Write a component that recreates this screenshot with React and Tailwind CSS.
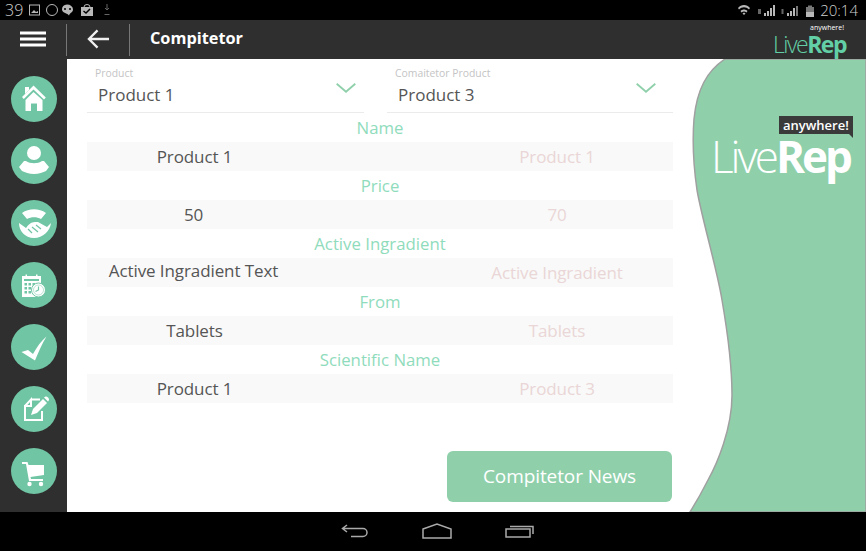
import React from "react";

const F = { fontFamily: '"Open Sans", sans-serif' };

const Home = () => (
  <svg viewBox="0 0 46 46" className="w-[46px] h-[46px]" fill="#fff">
    <path d="M22.500 9.500 L11 21 l1.800 2 L22.500 13.500 L33 23.500 l1.800-2 Z" />
    <path d="M14 11h4v3l-4 4z" />
    <path d="M14.500 24 L22.500 16 L31.500 24 V35 H26 V27.500 H20 V35 H14.500 Z" />
  </svg>
);
const User = () => (
  <svg viewBox="0 0 46 46" className="w-[46px] h-[46px]" fill="#fff">
    <circle cx="23" cy="15" r="7" />
    <path d="M15 23 c4 3 12 3 16 0 l2 0 l5 6 l-3 4 c-3 1 -7 3 -12 3 s-9 -2 -12 -3 l-3 -4 l5 -6z" />
  </svg>
);
const Shake = () => (
  <svg viewBox="0 0 46 46" className="w-[46px] h-[46px]" fill="#fff">
    <path d="M11 13 C18 8 28 8 35 13 L30 19 C26 16.500 20 16.500 16 19 Z" />
    <path d="M8 23 l7 5 c2-3 5-6 9-6 l3 0 l9 5 l4-4 C39 31 32 38 23 38 C14 38 8 31 8 23Z" />
    <path d="M17 29 l4 4 M21 27 l6 5 M25 25 l5 4" stroke="#70c5a4" strokeWidth="1.200" fill="none" />
  </svg>
);
const Plan = () => (
  <svg viewBox="0 0 46 46" className="w-[46px] h-[46px]">
    <rect x="11" y="14" width="19" height="21" fill="#fff" />
    <rect x="14.500" y="12.500" width="1.500" height="3.500" fill="#fff" />
    <rect x="25" y="12.500" width="1.500" height="3.500" fill="#fff" />
    <rect x="13" y="17" width="15" height="2" fill="#70c5a4" />
    <path d="M13.500 21h2.500v2.500h-2.500zM17.500 21h2.500v2.500h-2.500zM21.500 21h2.500v2.500h-2.500zM13.500 25h2.500v2.500h-2.500zM17.500 25h2.500v2.500h-2.500zM13.500 29h2.500v2.500h-2.500zM17.500 29h2.500v2.500h-2.500z" fill="#70c5a4" />
    <circle cx="27.500" cy="28" r="7" fill="#fff" stroke="#70c5a4" strokeWidth="1" />
    <circle cx="27.500" cy="28" r="5" fill="none" stroke="#a8dcc6" strokeWidth="0.800" />
    <path d="M27.500 24.500v3.500l-3 1.500" stroke="#70c5a4" strokeWidth="1.200" fill="none" />
  </svg>
);
const Check = () => (
  <svg viewBox="0 0 46 46" className="w-[46px] h-[46px]" fill="#fff">
    <path d="M10.500 28 L17 26 L22 30 C26 23 30 17 35.500 12.500 C31 20 27 29 24 36.500 Z" />
  </svg>
);
const Edit = () => (
  <svg viewBox="0 0 46 46" className="w-[46px] h-[46px]" fill="none">
    <path d="M20 13.500 H29 M14 20 L20 13.500 V20 H14 V34 H31 V25" stroke="#fff" strokeWidth="2" />
    <path d="M20 29 L22 23 L32 13 L36 17 L26 27 Z" fill="#fff" />
    <path d="M33 11.500 a2.500 2.500 0 0 1 4 4z" fill="#fff" />
  </svg>
);
const Cart = () => (
  <svg viewBox="0 0 46 46" className="w-[46px] h-[46px]" fill="#fff">
    <path d="M11 14 h5.500 l1 3 H33 V27 L19.500 29 L20 31 H32 V33 H18 L15 16 H11 Z" />
    <circle cx="18.500" cy="36" r="2.200" />
    <circle cx="30" cy="36" r="2.200" />
  </svg>
);

const Chevron = () => (
  <svg viewBox="0 0 20 10" className="w-5 h-[10px]" fill="none">
    <path d="M0.700 0.700 L10 8.800 L19.300 0.700" stroke="#8fd0ab" strokeWidth="1.800" />
  </svg>
);

const Select = ({ label, value, cls, chev }) => (
  <div className={`relative h-[54px] border-b border-[#ebebeb] ${cls}`}>
    <div className="pl-2 pt-[7px] text-[10.400px] leading-[14px] text-[#c4c4c4]">{label}</div>
    <div className="pl-[11px] pt-[1px] text-[17px] leading-[27px] text-[#555555]">{value}</div>
    <div className={`absolute top-[24px] flex ${chev}`}><Chevron /></div>
  </div>
);

const Row = ({ title, a, b, aCls = "", bCls = "" }) => (
  <>
    <div className="h-[29px] flex items-center justify-center text-[16.800px] text-[#8fdcbc]">{title}</div>
    <div className="h-[29px] bg-[#f9f9f9] flex items-center">
      <div className={`w-[213px] text-center text-[17px] tracking-[-0.100px] text-[#555555] ${aCls}`}>{a}</div>
      <div className={`w-[226px] ml-[144px] text-center text-[17px] tracking-[-0.100px] text-[#ead6d6] ${bCls}`}>{b}</div>
    </div>
  </>
);

const Logo = ({ small }) =>
  small ? (
    <div className="flex flex-col items-end mr-[20px] leading-none pb-[1px]">
      <span className="text-[7px] text-white mr-[2px] leading-[9px]">anywhere!</span>
      <span className="text-[23px] leading-[24px] tracking-[-1.500px] text-[#63cfa6] font-light">
        Live<span className="font-bold">Rep</span>
      </span>
    </div>
  ) : (
    <div className="flex flex-col items-end">
      <span className="relative bg-[#3a3a3a] text-white text-[13px] leading-[18px] font-semibold px-1 h-[18px]">
        anywhere!
        <span className="absolute right-0 top-full w-0 h-0 border-t-[4px] border-l-[4px] border-t-[#3a3a3a] border-l-transparent" />
      </span>
      <span className="pr-[3px] text-[44px] leading-[44px] tracking-[-3px] text-white font-light">
        Live<span className="font-bold">Rep</span>
      </span>
    </div>
  );

export default function App() {
  return (
    <div style={F} className="w-[866px] h-[551px] bg-black flex flex-col overflow-hidden">
      {/* status bar */}
      <div className="h-5 flex items-center justify-between text-[#b0b0b0]">
        <div className="flex items-center pl-[5px]">
          <span className="text-[16px] leading-5 font-light text-[#d0d0d0]">39</span>
          <svg viewBox="0 0 100 12" className="w-[100px] h-3 ml-[6px]" fill="none" stroke="#b8b8b8">
            <rect x="0.500" y="1" width="10" height="10" />
            <path d="M2 9l3-3 2 2 2-1v2z" fill="#b8b8b8" stroke="none" />
            <circle cx="23" cy="6" r="5.500" />
            <path d="M38 0.500 a6 5 0 0 1 6 5 c0 3-3 3-4 6 l-1-1 c-1-1-6-2-6-5 a6 5 0 0 1 5-5z" fill="#b8b8b8" stroke="none" />
            <circle cx="36" cy="5" r="1" fill="#000" stroke="none" />
            <circle cx="41" cy="5" r="1" fill="#000" stroke="none" />
            <rect x="52" y="3" width="12" height="9" fill="#b8b8b8" stroke="none" />
            <path d="M55 3 a3 2.500 0 0 1 6 0" />
            <path d="M54.500 7l2.500 2 4-4" stroke="#000" strokeWidth="1.500" />
            <path d="M78 0v6M76 4l2 2 2-2M75.500 10.500h5" stroke="#666" />
          </svg>
        </div>
        <div className="flex items-center pr-[8px]">
          <svg viewBox="0 0 76 14" className="w-[76px] h-[14px] mr-[6px]" fill="#b8b8b8">
            <path d="M0 5 C3 1 9 1 12 5 L11 6.500 C8 3.500 4 3.500 1 6.500Z" />
            <path d="M2.500 8 C4.500 6 7.500 6 9.500 8 L8.500 9.500 C7 8.300 5 8.300 3.500 9.500Z" />
            <path d="M4.500 10.500 L6 9.500 L7.500 10.500 L6 12Z" />
            <path d="M20 6h3v5h-3zM43.500 6h2v5h-2z" fill="#666" />
            <path d="M26 10h2v3h-2zM29 8h2v5h-2zM32 5h2v8h-2zM35 2h2v11h-2z" />
            <path d="M49 10h2v3h-2zM52 8h2v5h-2zM55 5h2v8h-2z" />
            <path d="M58 3h2v10h-2z" fill="#777" />
            <rect x="68" y="4" width="8" height="5" fill="#777" />
            <rect x="68" y="9" width="8" height="5" />
            <rect x="70" y="2.500" width="4" height="1.500" fill="#777" />
          </svg>
          <span className="text-[15px] leading-5 font-light text-[#d0d0d0]">20:14</span>
        </div>
      </div>

      {/* header */}
      <div className="h-[39px] bg-[#2f2f2f] flex items-center shrink-0">
        <div className="w-[66px] flex justify-center pb-[2px]">
          <svg viewBox="0 0 26 16" className="w-[26px] h-4" fill="#fff">
            <rect y="0.500" width="26" height="3" />
            <rect y="6.500" width="26" height="3" />
            <rect y="12.500" width="26" height="3" />
          </svg>
        </div>
        <div className="w-px h-8 bg-[#777777]" />
        <div className="w-[62px] flex justify-center pb-[2px]">
          <svg viewBox="0 0 24 20" className="w-[23px] h-5" fill="none" stroke="#f0f0f0" strokeWidth="2.400">
            <path d="M11 1 L2 10 L11 19 M2 10 H23" />
          </svg>
        </div>
        <div className="w-px h-8 bg-[#777777]" />
        <div className="ml-5 pb-[3px] text-[16.300px] font-bold text-white">Compitetor</div>
        <div className="flex-1 flex justify-end"><Logo small /></div>
      </div>

      {/* body */}
      <div className="h-[453px] flex shrink-0">
        <div className="w-[67px] bg-[#2f2f2f] flex flex-col items-center pt-[17px] gap-[16px] shrink-0">
          {[Home, User, Shake, Plan, Check, Edit, Cart].map((I, i) => (
            <div key={i} className="w-[46px] h-[46px] rounded-full bg-[#70c5a4] flex">
              <I />
            </div>
          ))}
        </div>
        <div className="relative flex-1 bg-white">
          <div className="absolute inset-0">
            <svg viewBox="0 0 799 453" className="w-[799px] h-[453px]">
              <path
                d="M658 0 C640 12 630 30 627 60 C625 85 627 110 630 131 C635 160 650 210 655 241 C660 270 665 310 665 336 C665 370 650 405 641 421 C634 435 628 445 623 453 H799 V0 Z"
                fill="#8fd0ab"
                stroke="#a0a0a0"
                strokeWidth="1.500"
              />
            </svg>
          </div>
          <div className="absolute left-[644px] top-[57px]"><Logo /></div>
          <div className="relative w-[586px] ml-5">
            <div className="flex gap-[23px]">
              <Select label="Product" value="Product 1" cls="w-[277px]" chev="right-[8px]" />
              <Select label="Comaitetor Product" value="Product 3" cls="w-[286px]" chev="right-[17px]" />
            </div>
            <Row title="Name" a="Product 1" b="Product 1" aCls="pl-[2px]" />
            <Row title="Price" a="50" b="70" />
            <Row title="Active Ingradient" a="Active Ingradient Text" b="Active Ingradient" aCls="pb-[3px]" />
            <Row title="From" a="Tablets" b="Tablets" aCls="pt-[1px] pl-[2px]" bCls="pt-[1px]" />
            <Row title="Scientific Name" a="Product 1" b="Product 3" aCls="pl-[2px]" />
            <div className="flex justify-end mt-[48px] pr-[1px]">
              <button className="w-[225px] h-[51px] rounded-md bg-[#8fd0ab] text-white text-[19px] tracking-[-0.100px]">Compitetor News</button>
            </div>
          </div>
        </div>
      </div>

      {/* nav */}
      <div className="flex-1 flex items-center pl-[341px] gap-[53px] pb-[1px]">
        <svg viewBox="0 0 28 14" className="w-7 h-[14px]" fill="none" stroke="#aaaaaa" strokeWidth="1.500">
          <path d="M6 1 L1.500 4.500 L6 8 M1.500 4.500 H22 a4 4 0 0 1 0 8 H10" />
        </svg>
        <svg viewBox="0 0 30 16" className="w-[30px] h-4" fill="none" stroke="#aaaaaa" strokeWidth="1.500">
          <path d="M1 6 L15 1 L29 6 V15 H1 Z" />
        </svg>
        <svg viewBox="0 0 29 14" className="w-[29px] h-[14px]" fill="none" stroke="#aaaaaa" strokeWidth="1.500">
          <rect x="1" y="5" width="24" height="8" />
          <path d="M5 2.500 H28 V10" />
        </svg>
      </div>
    </div>
  );
}
